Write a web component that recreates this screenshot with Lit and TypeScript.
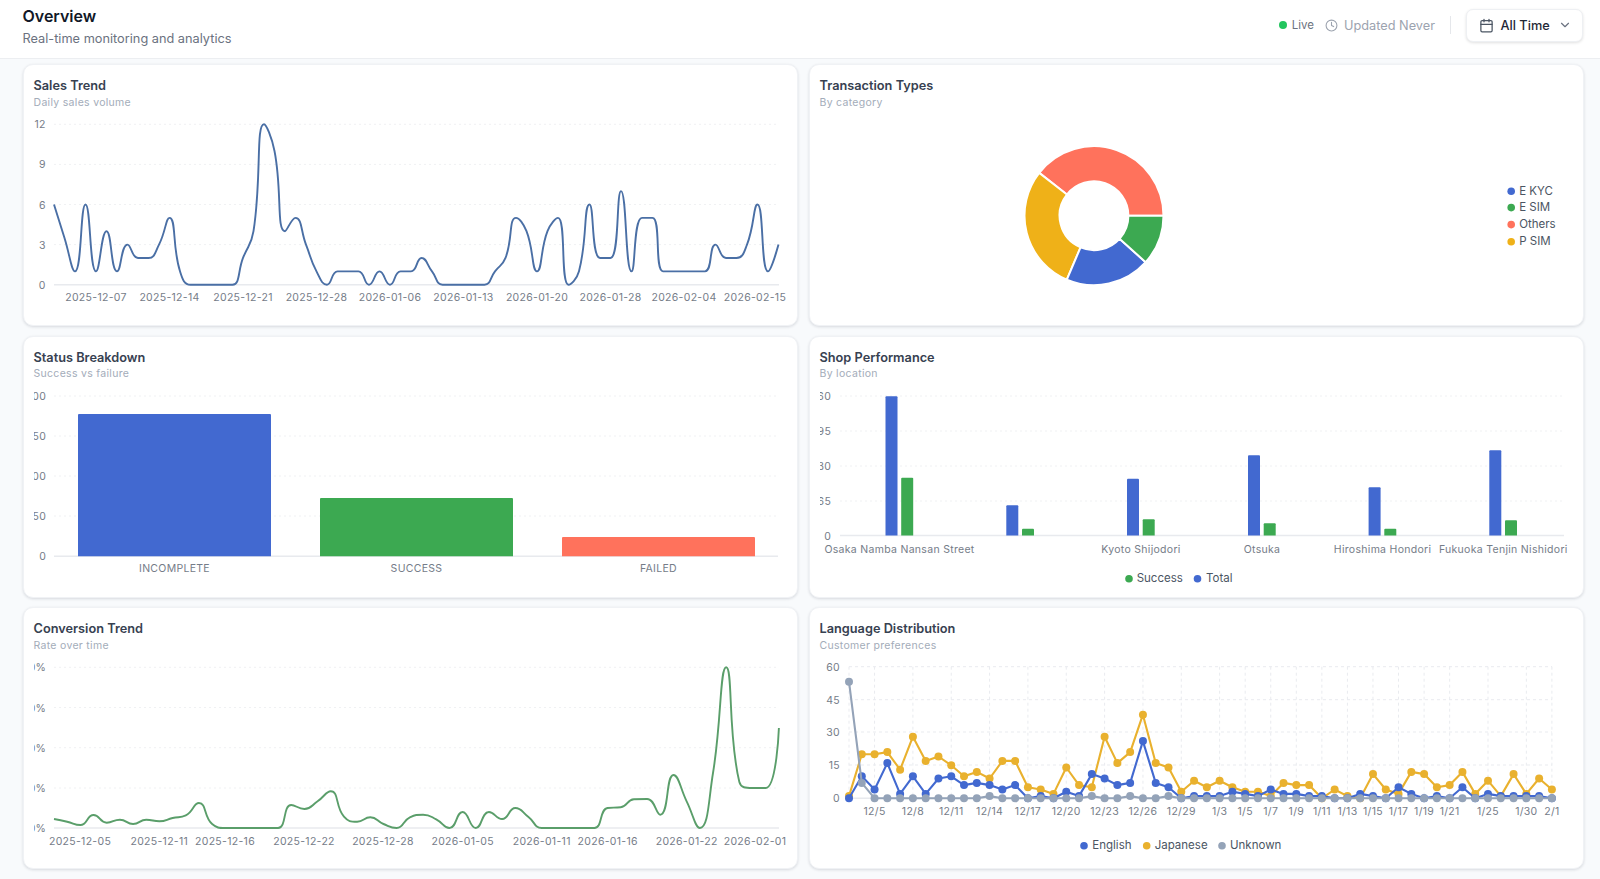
import { LitElement, html, css, svg } from "lit";
import { customElement } from "lit/decorators.js";

type Pt = [number, number];

function smoothPath(p: Pt[], smooth = 0.5): string {
  let d = `M${p[0][0]} ${p[0][1]}`;
  let c1x = p[0][0], c1y = p[0][1];
  for (let i = 1; i < p.length; i++) {
    const [x, y] = p[i];
    const [px, py] = p[i - 1];
    let n0x = x, n0y = y, n1x = x, n1y = y;
    if (i < p.length - 1) {
      const [nx, ny] = p[i + 1];
      let vx = nx - px, vy = ny - py;
      const lenP = Math.hypot(x - px, y - py);
      const lenN = Math.hypot(nx - x, ny - y);
      const r = lenN / (lenN + lenP);
      n1x = x + vx * smooth * r;
      n1y = y + vy * smooth * r;
      n1x = Math.max(Math.min(n1x, Math.max(nx, x)), Math.min(nx, x));
      n1y = Math.max(Math.min(n1y, Math.max(ny, y)), Math.min(ny, y));
      vx = n1x - x; vy = n1y - y;
      n0x = x - (vx * lenP) / lenN;
      n0y = y - (vy * lenP) / lenN;
      n0x = Math.max(Math.min(n0x, Math.max(px, x)), Math.min(px, x));
      n0y = Math.max(Math.min(n0y, Math.max(py, y)), Math.min(py, y));
      vx = x - n0x; vy = y - n0y;
      n1x = x + (vx * lenN) / lenP;
      n1y = y + (vy * lenN) / lenP;
    }
    d += `C${c1x.toFixed(2)} ${c1y.toFixed(2)} ${n0x.toFixed(2)} ${n0y.toFixed(2)} ${x.toFixed(2)} ${y.toFixed(2)}`;
    c1x = n1x; c1y = n1y;
  }
  return d;
}

const C = { blue: "#4269d0", green: "#3ca951", coral: "#ff725c", yellow: "#efb118", gray: "#94a3b8" };

function hGrid(ys: number[], x0: number, x1: number) {
  return ys.map((y, i) =>
    i === ys.length - 1
      ? svg`<line class="axis" x1=${x0} x2=${x1} y1=${y} y2=${y}></line>`
      : svg`<line class="grid" x1=${x0} x2=${x1} y1=${y} y2=${y}></line>`
  );
}
function yLabels(labels: string[], ys: number[], x: number) {
  return labels.map((t, i) => svg`<text class="tick end" x=${x} y=${ys[i]} dy="4">${t}</text>`);
}
function xLabels(items: [string, number][], y: number) {
  return items.map(([t, x]) => svg`<text class="tick mid" x=${x} y=${y} dy="4">${t}</text>`);
}
function legendItem(x: number, tx: number, y: number, t: string, col: string) {
  return svg`<circle cx=${x} cy=${y + 0.8} r="3.8" fill=${col}></circle><text class="leg" x=${tx} y=${y} dy="4.2">${t}</text>`;
}

/* ---------- Sales trend ---------- */
const salesData = [6,3.5,1,6,1,4,1,3,2,2,3,5,1,0,0,0,0,0,2,4,12,10,4,5,3,1,0,1,1,1,0,1,0,1,1,2,1,0,0,0,0,0,1,2,5,4,1,4,5,0,1,6,2,2,7,1,5,5,1,1,1,1,1,3,2,2,3,6,1,3];
function salesChart() {
  const ys = [124.3, 164.4, 204.5, 244.6, 284.7];
  const pts = salesData.map((v, i) => [54 + i * 10.5, 284.7 - v * 13.37] as Pt);
  const dates = ["2025-12-07","2025-12-14","2025-12-21","2025-12-28","2026-01-06","2026-01-13","2026-01-20","2026-01-28","2026-02-04","2026-02-15"];
  const xs = dates.map((d, i) => [d, i === 9 ? 755 : 54 + (4 + i * 7) * 10.5] as [string, number]);
  return svg`
    ${hGrid(ys, 54, 779)}
    ${yLabels(["12", "9", "6", "3", "0"], ys, 45.7)}
    ${xLabels(xs, 297.3)}
    <path class="line" stroke="#4a6fa5" d=${smoothPath(pts)}></path>`;
}

/* ---------- Donut ---------- */
function arc(cx: number, cy: number, R: number, r: number, a0: number, a1: number) {
  const pt = (rad: number, a: number) => {
    const t = (a * Math.PI) / 180;
    return `${(cx + rad * Math.cos(t)).toFixed(2)} ${(cy - rad * Math.sin(t)).toFixed(2)}`;
  };
  const large = a1 - a0 > 180 ? 1 : 0;
  return `M${pt(R, a0)}A${R} ${R} 0 ${large} 0 ${pt(R, a1)}L${pt(r, a1)}A${r} ${r} 0 ${large} 1 ${pt(r, a0)}Z`;
}
function donutChart() {
  const slices: [number, number, string][] = [
    [0, 142, C.coral],
    [142, 247, C.yellow],
    [247, 318, C.blue],
    [318, 360, C.green],
  ];
  return svg`
    ${slices.map(([a, b, c]) => svg`<path d=${arc(1094, 215.7, 69.5, 34.4, a, b)} fill=${c} stroke="#fff" stroke-width="2" stroke-linejoin="round"></path>`)}
    ${legendItem(1511.2, 1519.2, 190.5, "E KYC", C.blue)}
    ${legendItem(1511.2, 1519.2, 206.8, "E SIM", C.green)}
    ${legendItem(1511.2, 1519.2, 223.8, "Others", C.coral)}
    ${legendItem(1511.2, 1519.2, 241, "P SIM", C.yellow)}`;
}

/* ---------- Status ---------- */
function statusChart() {
  const ys = [396, 436, 476, 516, 556.3];
  const bars: [number, number, string, string][] = [
    [78, 414, C.blue, "INCOMPLETE"],
    [320, 498, C.green, "SUCCESS"],
    [562, 537, C.coral, "FAILED"],
  ];
  return svg`
    ${hGrid(ys, 54, 778)}
    ${yLabels(["200", "150", "100", "50", "0"], ys, 46.2)}
    ${bars.map(([x, y, c]) => svg`<path d="M${x} 556.3V${y + 1}q0-1 1-1H${x + 192}q1 0 1 1V556.3Z" fill=${c}></path>`)}
    ${xLabels(bars.map(([x, , , t]) => [t, x + 96.5] as [string, number]), 568.3)}`;
}

/* ---------- Shop ---------- */
function shopChart() {
  const ys = [396, 431, 466, 501, 535.6];
  const groups: [number, number, number, string][] = [
    [885.5, 396.3, 477.7, "Osaka Namba Nansan Street"],
    [1006.3, 505.3, 528.7, ""],
    [1127, 478.7, 519.3, "Kyoto Shijodori"],
    [1248, 455.3, 523.3, "Otsuka"],
    [1368.6, 487.3, 528.7, "Hiroshima Hondori"],
    [1489.3, 450.3, 520.3, "Fukuoka Tenjin Nishidori"],
  ];
  const bar = (x: number, y: number, c: string) =>
    svg`<path d="M${x} 535.6V${y + 1}q0-1 1-1H${x + 11}q1 0 1 1V535.6Z" fill=${c}></path>`;
  return svg`
    ${hGrid(ys, 840, 1564)}
    ${yLabels(["260", "195", "130", "65", "0"], ys, 831.1)}
    ${groups.map(([x, b, g]) => svg`${bar(x, b, C.blue)}${bar(x + 15.7, g, C.green)}`)}
    ${xLabels(groups.filter((g) => g[3]).map((g) => [g[3], g[0] + 14] as [string, number]), 548.5)}
    ${legendItem(1129, 1136.7, 578, "Success", C.green)}
    ${legendItem(1197.5, 1206, 578, "Total", C.blue)}`;
}

/* ---------- Conversion ---------- */
const convData = [9,6.3,3,13,5.3,8.3,4,8.3,6.7,10,12.7,25,4,0,0,0,0,0,23,19,26.7,36.7,11.3,6.3,10.7,4,0,10.7,13.3,8.7,0,16,0,16,9,20,11,0,0,0,0,0,20,20.7,28.7,29,13.3,53,26.7,0,55,160.7,46,40,40,100];
function convChart() {
  const ys = [667.3, 707.5, 747.7, 788, 828];
  const pts = convData.map((v, i) => [54 + i * 13.18, 828 - v] as Pt);
  const xs: [string, number][] = [
    ["2025-12-05", 80], ["2025-12-11", 159.3], ["2025-12-16", 225], ["2025-12-22", 304], ["2025-12-28", 383],
    ["2026-01-05", 462.7], ["2026-01-11", 541.7], ["2026-01-16", 607.7], ["2026-01-22", 686.7], ["2026-02-01", 755],
  ];
  return svg`
    ${hGrid(ys, 54, 779)}
    ${yLabels(["40%", "30%", "20%", "10%", "0%"], ys, 46.2)}
    ${xLabels(xs, 840.5)}
    <path class="line" stroke="#5a9e6a" d=${smoothPath(pts)}></path>`;
}

/* ---------- Language ---------- */
const langJ = [1,20,20,21,13,28,17,19,15,10,12,9,17,17,5,4,2,14,6,5,28,16,21,38,16,14,3,8,5,8,5,3,3,1,7,6,6,0,4,1,0,11,4,2,12,11,5,6,12,2,8,1,11,2,9,4];
const langE = [0,10,4,16,2,10,2,9,10,6,7,6,4,6,0,1,0,3,1,11,9,6,7,26,7,5,0,1,1,1,3,2,1,4,2,2,1,1,0,0,2,1,0,5,2,0,1,0,5,0,2,1,1,1,1,0];
const langU = langE.map((_, i) => (i === 0 ? 53 : i === 1 ? 7 : [11, 19, 22, 25].includes(i) ? 1 : 0));
function langChart() {
  const X = (i: number) => 849 + i * 12.78;
  const ys = [666.7, 699.7, 732, 765, 798.3];
  const Y = (v: number) => 798.3 - v * 2.2;
  const labelled: [string, number][] = [
    ["12/5",2],["12/8",5],["12/11",8],["12/14",11],["12/17",14],["12/20",17],["12/23",20],["12/26",23],["12/29",26],
    ["1/3",29],["1/5",31],["1/7",33],["1/9",35],["1/11",37],["1/13",39],["1/15",41],["1/17",43],["1/19",45],["1/21",47],["1/25",50],["1/30",53],["2/1",55],
  ];
  const series = (d: number[], c: string) => svg`
    <polyline class="line thick" stroke=${c} stroke-linejoin="round" points=${d.map((v, i) => `${X(i).toFixed(1)},${Y(v).toFixed(1)}`).join(" ")}></polyline>
    ${d.map((v, i) => svg`<circle cx=${X(i)} cy=${Y(v)} r="4" fill=${c}></circle>`)}`;
  return svg`
    ${ys.slice(0, 4).map((y) => svg`<line class="dash" x1="849" x2="1552" y1=${y} y2=${y}></line>`)}
    ${[0, ...labelled.map((l) => l[1])].map((i) => svg`<line class="dash" x1=${X(i)} x2=${X(i)} y1="666.7" y2="798.3"></line>`)}
    <line class="axis" x1="849" x2="1552" y1="798.3" y2="798.3"></line>
    ${yLabels(["60", "45", "30", "15", "0"], ys, 840)}
    ${xLabels(labelled.map(([t, i]) => [t, X(i)] as [string, number]), 810.7)}
    ${series(langJ, "#e9b12e")}
    ${series(langE, C.blue)}
    ${series(langU, C.gray)}
    ${legendItem(1084, 1092.3, 845, "English", C.blue)}
    ${legendItem(1146.7, 1154.7, 845, "Japanese", "#e9b12e")}
    ${legendItem(1222, 1230, 845, "Unknown", C.gray)}`;
}

const cards = [
  { t: "Sales Trend", s: "Daily sales volume", vb: "34 112 752 206", draw: salesChart },
  { t: "Transaction Types", s: "By category", vb: "820 112 752 206", draw: donutChart },
  { t: "Status Breakdown", s: "Success vs failure", vb: "34 384 752 206", draw: statusChart },
  { t: "Shop Performance", s: "By location", vb: "820 384 752 206", draw: shopChart },
  { t: "Conversion Trend", s: "Rate over time", vb: "34 655 752 206", draw: convChart },
  { t: "Language Distribution", s: "Customer preferences", vb: "820 655 752 206", draw: langChart },
];

@customElement("app-root")
export class AppRoot extends LitElement {
  static styles = css`
    :host {
      display: block;
      height: 879px;
      overflow: hidden;
      background: #f8fafc;
      font-family: Inter, "Liberation Sans", sans-serif;
    }
    .top {
      height: 59px;
      box-sizing: border-box;
      background: #fff;
      border-bottom: 1px solid #eceef1;
      display: flex;
      align-items: center;
      justify-content: space-between;
      padding: 0 17px 0 22.5px;
    }
    .heading { display: flex; flex-direction: column; gap: 5px; padding-bottom: 5px; }
    h1 { margin: 0; font-size: 16px; line-height: 20px; font-weight: 600; color: #111827; }
    .sub { font-size: 12.75px; line-height: 16px; color: #6b7280; }
    .right { display: flex; align-items: center; margin-bottom: 8px; }
    .dot { width: 8px; height: 8px; border-radius: 50%; background: #22c55e; margin-right: 5px; }
    .live { font-size: 11.5px; color: #6b7280; margin-right: 11px; }
    .clock { width: 13px; height: 13px; color: #9ca3af; margin-right: 6px; display: block; }
    .upd { font-size: 12.75px; color: #9ca3af; }
    .divider { width: 1px; height: 18px; background: #e5e7eb; margin: 0 15px; }
    .btn {
      width: 117px;
      height: 33px;
      box-sizing: border-box;
      display: flex;
      align-items: center;
      padding-left: 11.5px;
      background: #fff;
      border: 1px solid #eef0f3;
      border-radius: 7px;
      box-shadow: 0 1px 3px rgba(0, 0, 0, 0.12);
      font-size: 12.75px;
      font-weight: 500;
      color: #1f2937;
    }
    .btn svg { display: block; }
    .cal { width: 15px; height: 15px; color: #4b5563; margin-right: 7px; }
    .chev { width: 14px; height: 14px; color: #6b7280; margin-left: 8px; }
    .grid-main {
      display: grid;
      grid-template-columns: 775px 775px;
      grid-auto-rows: 262px;
      column-gap: 11px;
      row-gap: 9.5px;
      padding: 5px 16.5px 0 22.5px;
    }
    .card {
      box-sizing: border-box;
      background: #fff;
      border-radius: 10px;
      border: 1px solid #f0f2f5;
      box-shadow: 0 1px 3px rgba(15, 23, 42, 0.14);
      padding: 12px 10px 0;
    }
    .t { font-size: 12.75px; line-height: 17.5px; font-weight: 600; color: #374151; }
    .s { font-size: 10.5px; line-height: 15px; color: #a3acb9; letter-spacing: 0.3px; margin-bottom: 2.5px; }
    .plot { display: block; width: 752px; height: 206px; }
    .grid { stroke: #f0f1f3; stroke-width: 1; stroke-dasharray: 2 3; }
    .axis { stroke: #e8eaee; stroke-width: 1.5; }
    .dash { stroke: #e9ebef; stroke-width: 1; stroke-dasharray: 3 3; }
    .line { fill: none; stroke-width: 1.9; }
    .thick { stroke-width: 2.1; }
    .tick { font-size: 10.5px; fill: #757c88; letter-spacing: 0.3px; }
    .leg { font-size: 11.5px; fill: #4b5563; }
    .end { text-anchor: end; }
    .mid { text-anchor: middle; }
  `;

  render() {
    return html`
      <header class="top">
        <div class="heading">
          <h1>Overview</h1>
          <div class="sub">Real-time monitoring and analytics</div>
        </div>
        <div class="right">
          <span class="dot"></span><span class="live">Live</span>
          <svg class="clock" viewBox="0 0 24 24" fill="none" stroke="currentColor" stroke-width="2" stroke-linecap="round" stroke-linejoin="round"><circle cx="12" cy="12" r="10"></circle><path d="M12 6v6l4 2"></path></svg>
          <span class="upd">Updated Never</span>
          <span class="divider"></span>
          <div class="btn">
            <svg class="cal" viewBox="0 0 24 24" fill="none" stroke="currentColor" stroke-width="2" stroke-linecap="round" stroke-linejoin="round"><path d="M8 2v4M16 2v4"></path><rect x="3" y="4" width="18" height="18" rx="2"></rect><path d="M3 10h18"></path></svg>
            All Time
            <svg class="chev" viewBox="0 0 24 24" fill="none" stroke="currentColor" stroke-width="2" stroke-linecap="round" stroke-linejoin="round"><path d="m6 9 6 6 6-6"></path></svg>
          </div>
        </div>
      </header>
      <main class="grid-main">
        ${cards.map(
          (c) => html`
            <section class="card">
              <div class="t">${c.t}</div>
              <div class="s">${c.s}</div>
              <svg class="plot" viewBox=${c.vb}>${c.draw()}</svg>
            </section>
          `
        )}
      </main>
    `;
  }
}
